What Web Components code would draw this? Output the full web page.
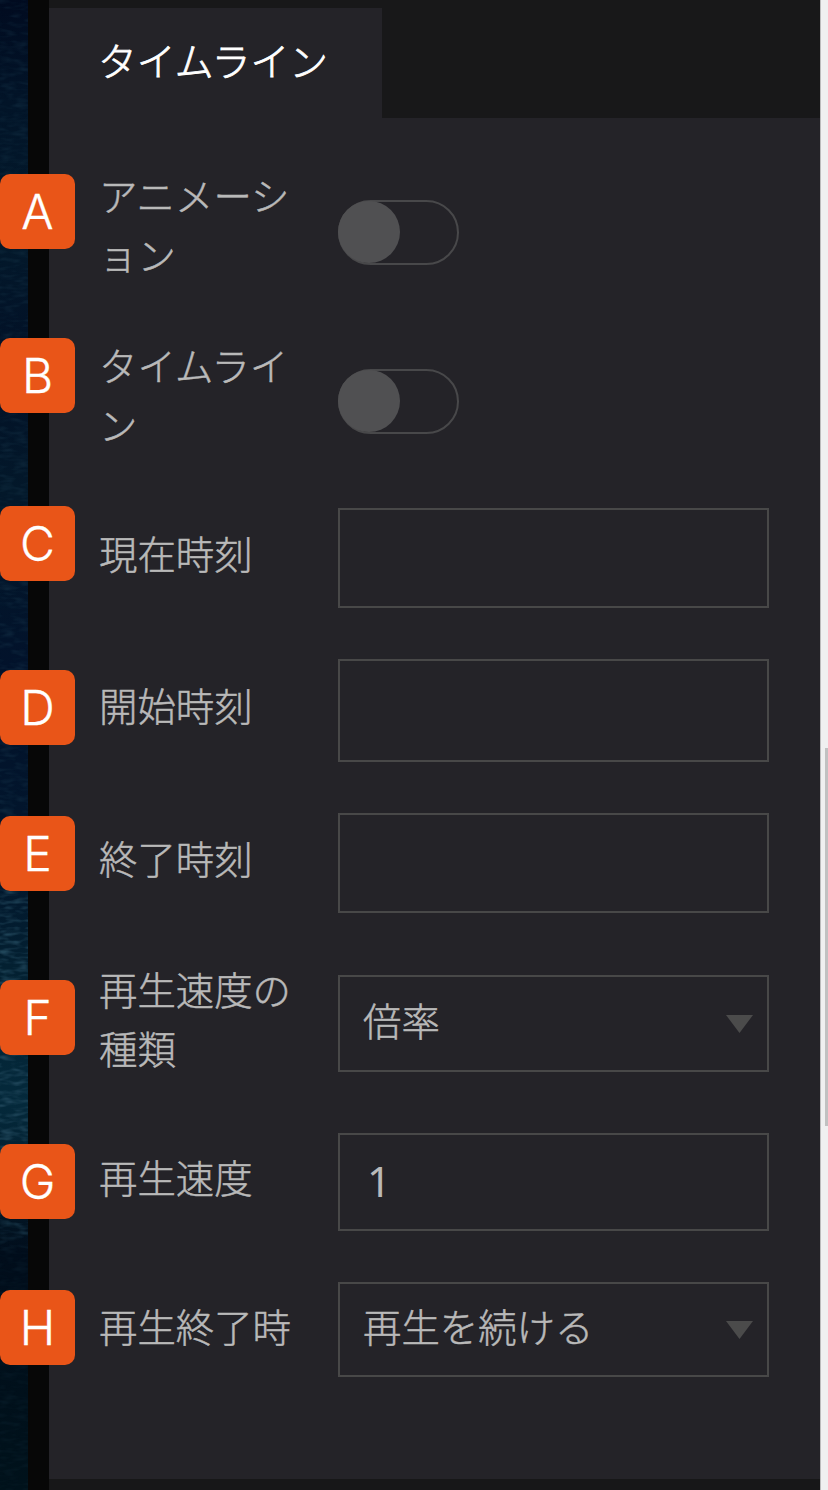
<!DOCTYPE html>
<html lang="ja">
<head>
<meta charset="utf-8">
<title>タイムライン</title>
<style>
  html, body { margin: 0; background: #070707; }
  body { font-family: "Noto Sans CJK JP", sans-serif; width: 828px; height: 1490px; overflow: hidden; }
</style>
</head>
<body>
<timeline-panel></timeline-panel>
<script>
const define = (name, html, setup) => customElements.define(name, class extends HTMLElement {
  constructor() {
    super();
    this.attachShadow({ mode: 'open' }).innerHTML = html;
  }
  connectedCallback() { if (setup) setup(this, this.shadowRoot); }
});

define('marker-badge', `
  <style>
    :host { display: flex; width: 75px; height: 75px; border-radius: 10px; background: #e95518;
      color: #fff; align-items: center; justify-content: center; font: 300 48px/75px Inter, sans-serif; -webkit-text-stroke: .3px #fff; }
  </style><slot></slot>`);

define('toggle-switch', `
  <style>
    :host { display: block; box-sizing: border-box; width: 121px; height: 65px; border: 2.5px solid #48484a; border-radius: 33px; }
    i { display: block; width: 62px; height: 62px; margin: -1px 0 0 -2px; border-radius: 50%; background: #505052; }
  </style><i></i>`);

define('value-box', `
  <style>
    :host { display: flex; box-sizing: border-box; width: 431px; height: var(--h); border: 2.5px solid #484848; padding: 0 14px 0 23px;
      align-items: center; justify-content: space-between; color: #b9b9b9; font-size: 38.4px; font-weight: 300; line-height: 56px; -webkit-text-stroke: .5px #b9b9b9; }
    :host([number]) { padding-left: 27px; font-family: "Noto Sans", sans-serif; font-weight: 400; font-size: 42px; -webkit-text-stroke: 0; }
    svg { display: none; }
    :host([select]) svg { display: block; }
    span { margin-top: -9px; }
    :host([number]) span { margin-top: -2px; }
  </style>
  <span><slot></slot></span>
  <svg width="27" height="18" viewBox="0 0 27 18"><path d="M0 0H27L13.5 18Z" fill="#4b4b4b"/></svg>`,
  (el) => el.style.setProperty('--h', (el.getAttribute('size') || 100) + 'px'));

define('field-row', `
  <style>
    :host { display: grid; grid-template-columns: 99px 239px 431px; align-items: start; height: var(--h); }
    .badge { margin-top: var(--b); }
    .label { margin-top: calc(var(--l) - 2px); width: 200px; color: #b9b9b9; font-size: 38.4px; font-weight: 300; line-height: 59px;
      line-break: anywhere; -webkit-text-stroke: .5px #b9b9b9; }
    .control { margin-top: var(--c); }
  </style>
  <div class="badge"><marker-badge><slot name="key"></slot></marker-badge></div>
  <div class="label"><slot></slot></div>
  <div class="control"><slot name="control"></slot></div>`,
  (el) => {
    const [h, b, l, c] = el.getAttribute('metrics').split(' ');
    Object.entries({ h, b, l, c }).forEach(([k, v]) => el.style.setProperty('--' + k, v + 'px'));
  });

define('tab-strip', `
  <style>
    :host { display: flex; height: 118px; box-sizing: border-box; padding: 8px 0 0 49px;
      background: linear-gradient(90deg, transparent 49px, #181819 49px); }
    .tab { width: 333px; box-sizing: border-box; padding-left: 49px; background: #242328; color: #fff; font-size: 38.8px; font-weight: 300;
      line-height: 103px; -webkit-text-stroke: .8px #fff; }
  </style><div class="tab"><slot></slot></div>`);

define('sea-backdrop', `
  <style>
    :host { display: block; width: 28px; height: 1490px; overflow: hidden; }
    svg { display: block; }
  </style>
  <svg width="28" height="1490">
    <defs>
      <linearGradient id="g" x1="0" y1="0" x2="0" y2="1">
        <stop offset="0" stop-color="#010b20"/><stop offset=".07" stop-color="#021428"/><stop offset=".16" stop-color="#03192b"/>
        <stop offset=".24" stop-color="#021026"/><stop offset=".33" stop-color="#03182a"/><stop offset=".45" stop-color="#02122b"/>
        <stop offset=".58" stop-color="#02162c"/><stop offset=".65" stop-color="#032031"/><stop offset=".74" stop-color="#04293b"/>
        <stop offset=".8" stop-color="#031b2b"/><stop offset=".84" stop-color="#010d1b"/><stop offset="1" stop-color="#00121b"/>
      </linearGradient>
      <linearGradient id="f" x1="0" y1="0" x2="0" y2="1">
        <stop offset="0" stop-color="#fff" stop-opacity=".25"/><stop offset=".56" stop-color="#fff" stop-opacity=".3"/>
        <stop offset=".62" stop-color="#fff" stop-opacity=".9"/><stop offset=".81" stop-color="#fff" stop-opacity=".9"/>
        <stop offset=".84" stop-color="#fff" stop-opacity=".15"/><stop offset="1" stop-color="#fff" stop-opacity=".15"/>
      </linearGradient>
      <mask id="m"><rect width="28" height="1490" fill="url(#f)"/></mask>
      <filter id="n" x="0" y="0" width="100%" height="100%" color-interpolation-filters="sRGB">
        <feTurbulence type="fractalNoise" baseFrequency=".07 .22" numOctaves="2" seed="4"/>
        <feColorMatrix values="0 0 0 0 .14  0 0 0 0 .29  0 0 0 0 .37  2.4 0 0 0 -1.05"/>
      </filter>
    </defs>
    <rect width="28" height="1490" fill="url(#g)"/>
    <g mask="url(#m)"><rect width="28" height="1490" filter="url(#n)"/></g>
  </svg>`);

define('scroll-track', `
  <style>
    :host { display: block; box-sizing: border-box; width: 8px; height: 1490px; border-left: 1px solid #bcbcbc; background: #f0f0f0; padding: 748px 0 0 4px; }
    i { display: block; height: 378px; background: #c1c1c1; }
  </style><i></i>`);

define('timeline-panel', `
  <style>
    :host { display: grid; grid-template-columns: 820px 8px; width: 828px; height: 1490px; }
    sea-backdrop, main { grid-area: 1 / 1; }
    main { position: relative; height: 1490px; display: flex; flex-direction: column; }
    .body { height: 1361px; box-sizing: border-box; padding-top: 49px;
      background: linear-gradient(90deg, transparent 49px, #242328 49px); }
    footer { height: 11px; margin-left: 49px; background: #171718; }
  </style>
  <sea-backdrop></sea-backdrop>
  <main>
    <tab-strip>タイムライン</tab-strip>
    <div class="body">
      <field-row metrics="170 7 0 33"><span slot="key">A</span>アニメーション<toggle-switch slot="control"></toggle-switch></field-row>
      <field-row metrics="169 1 0 32"><span slot="key">B</span>タイムライン<toggle-switch slot="control"></toggle-switch></field-row>
      <field-row metrics="151 0 19 2"><span slot="key">C</span>現在時刻<value-box slot="control" size="100"></value-box></field-row>
      <field-row metrics="154 13 20 2"><span slot="key">D</span>開始時刻<value-box slot="control" size="103"></value-box></field-row>
      <field-row metrics="150 5 19 2"><span slot="key">E</span>終了時刻<value-box slot="control" size="100"></value-box></field-row>
      <field-row metrics="170 19 0 14"><span slot="key">F</span>再生速度の種類<value-box slot="control" size="97" select>倍率</value-box></field-row>
      <field-row metrics="149 13 18 2"><span slot="key">G</span>再生速度<value-box slot="control" size="98" number>1</value-box></field-row>
      <field-row metrics="160 10 18 2"><span slot="key">H</span>再生終了時<value-box slot="control" size="95" select>再生を続ける</value-box></field-row>
    </div>
    <footer></footer>
  </main>
  <scroll-track></scroll-track>`);
</script>
</body>
</html>
